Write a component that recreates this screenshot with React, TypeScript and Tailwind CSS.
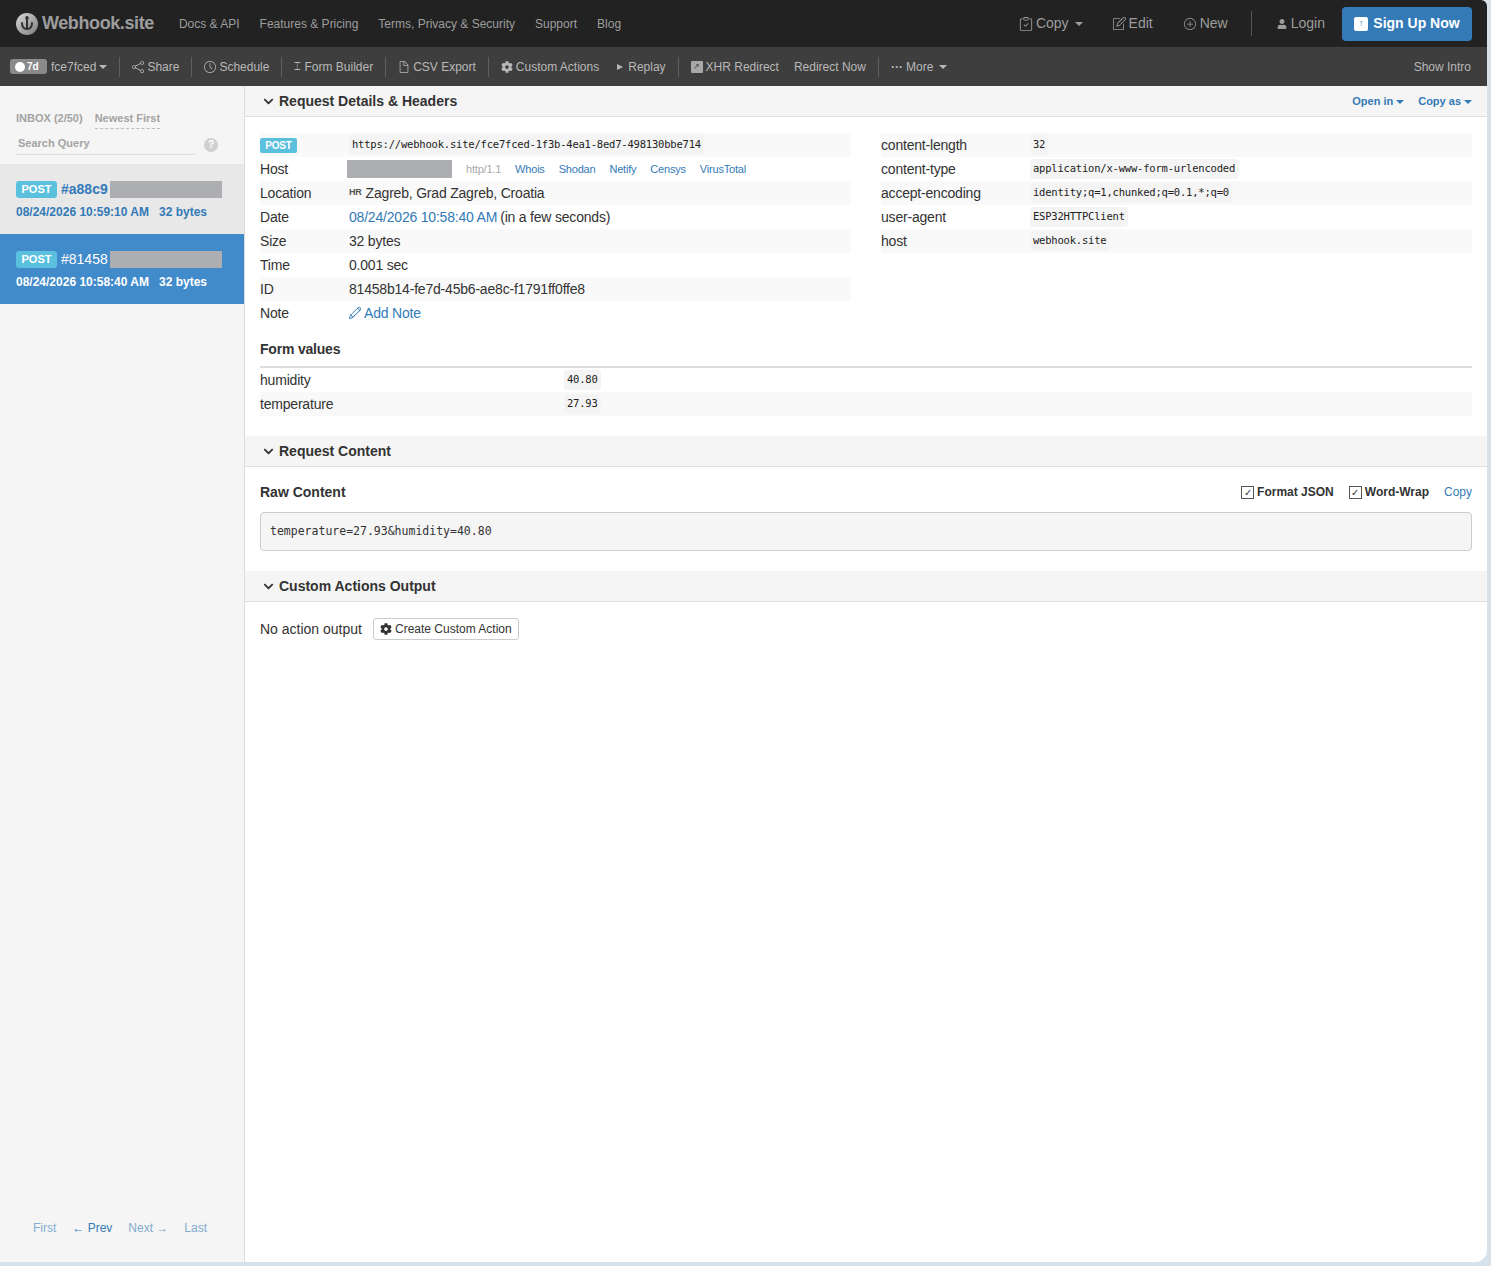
import { FaCog, FaChevronDown, FaUser } from "react-icons/fa";
import { SlShare, SlClock, SlDoc, SlPencil, SlPlus, SlNote } from "react-icons/sl";
import { BsClipboardCheck } from "react-icons/bs";
import type { ReactNode } from "react";

const font = { fontFamily: '"Liberation Sans", Arial, sans-serif' };

function Caret({ className = "" }: { className?: string }) {
  return <span className={`ml-[3px] inline-block h-0 w-0 border-x-4 border-t-4 border-x-transparent border-t-current align-middle ${className}`} />;
}

function Logo() {
  return (
    <svg width="22" height="22" viewBox="0 0 22 22" className="shrink-0">
      <defs>
        <linearGradient id="lg" x1="0" y1="0" x2="1" y2="1">
          <stop offset="0" stopColor="#d8d8d8" />
          <stop offset="1" stopColor="#7c7c7c" />
        </linearGradient>
      </defs>
      <circle cx="11" cy="11" r="11" fill="url(#lg)" />
      <path d="M11 4v11M6 10c0 4 2 6 5 6s5-2 5-6" stroke="#333" strokeWidth="2" fill="none" strokeLinecap="round" />
      <circle cx="11" cy="5" r="1.8" fill="#333" />
    </svg>
  );
}

function Sep() {
  return <span className="mx-[12px] h-[20px] w-px bg-[#5e5e5e]" />;
}

function ToolItem({ icon, children }: { icon?: ReactNode; children: ReactNode }) {
  return (
    <span className="flex items-center gap-[3px] whitespace-nowrap">
      {icon}
      {children}
    </span>
  );
}

function SectionHeader({ title, right }: { title: string; right?: ReactNode }) {
  return (
    <div className="flex h-[31px] items-center justify-between border-b border-[#dfdfdf] bg-[#f5f5f5] pl-[18px] pr-[15px]">
      <div className="flex items-center gap-[5px] text-[14px] font-bold text-[#333]">
        <FaChevronDown className="text-[11px]" />
        {title}
      </div>
      {right}
    </div>
  );
}

function Mono({ children }: { children: ReactNode }) {
  return (
    <code className="rounded-[4px] bg-[#f4f4f4] px-[3px] py-[2px] text-[10.5px] text-[#222]" style={{ fontFamily: '"DejaVu Sans Mono", monospace' }}>
      {children}
    </code>
  );
}

function Row({ label, children, striped, labelWidth = 89 }: { label: ReactNode; children: ReactNode; striped?: boolean; labelWidth?: number }) {
  return (
    <div className={`flex h-[24px] items-center text-[14px] tracking-[-0.2px] text-[#333] ${striped ? "bg-[#f9f9f9]" : ""}`}>
      <div className="shrink-0" style={{ width: labelWidth }}>{label}</div>
      <div className="flex min-w-0 items-center">{children}</div>
    </div>
  );
}

function RequestItem({ hash, date, active }: { hash: string; date: string; active?: boolean }) {
  return (
    <div className={`h-[70px] pl-[16px] pt-[17px] ${active ? "bg-[#428bca] text-white" : "bg-[#e8e8e8] text-[#337ab7]"}`}>
      <div className="flex h-[17px] items-center">
        <span className="flex h-[17px] w-[41px] items-center justify-center rounded-[3px] bg-[#5bc0de] text-[11px] font-bold text-white">POST</span>
        <span className={`ml-[4px] text-[14px] ${active ? "" : "font-bold"}`}>{hash}</span>
        <span className="absolute left-[110px] h-[17px] w-[112px] bg-[#acaeb1]" />
      </div>
      <div className="mt-[5px] flex gap-[10px] text-[12px] font-bold">
        <span>{date}</span>
        <span>32 bytes</span>
      </div>
    </div>
  );
}

export default function App() {
  return (
    <div className="h-[1266px] w-full overflow-hidden bg-[#d8e2ea] pb-[4px] pr-[4px]" style={font}>
      <div className="flex h-full flex-col overflow-hidden rounded-br-[12px] rounded-tr-[6px] bg-white">
        {/* top nav */}
        <header className="flex h-[47px] shrink-0 items-center bg-[#222] pl-[16px] pr-[15px] text-[12px] text-[#9d9d9d]">
          <Logo />
          <span className="ml-[4px] text-[18px] font-bold tracking-[-0.4px] text-[#9d9d9d]">Webhook.site</span>
          <nav className="ml-[25px] flex gap-[20px]">
            <span>Docs &amp; API</span>
            <span>Features &amp; Pricing</span>
            <span>Terms, Privacy &amp; Security</span>
            <span>Support</span>
            <span>Blog</span>
          </nav>
          <div className="ml-auto flex items-center text-[14px]">
            <span className="flex items-center gap-[3px]"><BsClipboardCheck className="text-[14px]" />Copy<Caret /></span>
            <span className="ml-[30px] flex items-center gap-[3px]"><SlNote className="text-[13px]" />Edit</span>
            <span className="ml-[31px] flex items-center gap-[4px]"><SlPlus className="text-[12px]" />New</span>
            <span className="ml-[23px] h-[25px] w-px bg-[#555]" />
            <span className="ml-[25px] flex items-center gap-[4px]"><FaUser className="text-[10px]" />Login</span>
            <span className="ml-[17px] flex h-[34px] w-[130px] items-center justify-center gap-[5px] rounded-[4px] bg-[#337ab7] text-[14px] font-bold text-white">
              <span className="flex h-[14px] w-[14px] items-center justify-center rounded-[2px] bg-white text-[9px] font-normal text-[#337ab7]">↑</span>
              Sign Up Now
            </span>
          </div>
        </header>

        {/* toolbar */}
        <div className="flex h-[39px] shrink-0 items-center bg-[#3e3e3e] pl-[10px] pr-[16px] text-[12px] text-[#b8b8b8]">
          <span className="flex h-[15px] w-[37px] items-center gap-[2px] rounded-[3px] bg-[#8a8a8a] pl-[5px] text-[10px] font-bold text-white">
            <span className="h-[10px] w-[10px] rounded-full bg-white" />7d
          </span>
          <span className="ml-[4px]">fce7fced<Caret /></span>
          <Sep />
          <ToolItem icon={<SlShare className="text-[12px]" />}>Share</ToolItem>
          <Sep />
          <ToolItem icon={<SlClock className="text-[12px]" />}>Schedule</ToolItem>
          <Sep />
          <ToolItem icon={<span className="text-[11px]">⌶</span>}>Form Builder</ToolItem>
          <Sep />
          <ToolItem icon={<SlDoc className="text-[12px]" />}>CSV Export</ToolItem>
          <Sep />
          <ToolItem icon={<FaCog className="text-[12px]" />}>Custom Actions</ToolItem>
          <span className="ml-[18px] mr-[5px] h-0 w-0 border-y-[3.5px] border-l-[6px] border-y-transparent border-l-[#b8b8b8]" />
          <span>Replay</span>
          <Sep />
          <ToolItem icon={<span className="flex h-[12px] w-[12px] items-center justify-center rounded-[1px] bg-[#a8a8a8] text-[8px] text-[#444]">↗</span>}>XHR Redirect</ToolItem>
          <span className="ml-[15px]">Redirect Now</span>
          <Sep />
          <span className="flex items-center gap-[3px]"><span className="font-bold">···</span>More<Caret /></span>
          <span className="ml-auto">Show Intro</span>
        </div>

        <div className="flex min-h-0 flex-1">
          {/* sidebar */}
          <aside className="relative flex w-[245px] shrink-0 flex-col border-r border-[#dcdcdc] bg-[#f5f5f5]">
            <div className="h-[78px] pl-[16px] pt-[24px] text-[11px] font-bold text-[#a3a3a3]">
              <div className="flex">
                <span>INBOX (2/50)</span>
                <span className="ml-[12px] border-b border-dashed border-[#bbb] pb-[1px]">Newest First</span>
              </div>
              <div className="mt-[6px] flex items-center">
                <div className="w-[179px] border-b border-[#ddd] pb-[3px] pl-[2px]">Search Query</div>
                <span className="ml-[9px] flex h-[14px] w-[14px] items-center justify-center rounded-full bg-[#d0d0d0] text-[10px] text-white">?</span>
              </div>
            </div>
            <div className="relative">
              <RequestItem hash="#a88c9" date="08/24/2026 10:59:10 AM" />
              <RequestItem hash="#81458" date="08/24/2026 10:58:40 AM" active />
            </div>
            <div className="mt-auto flex h-[43px] gap-[16px] pl-[33px] text-[12px] text-[#337ab7]">
              <span className="opacity-60">First</span>
              <span>← Prev</span>
              <span className="opacity-60">Next →</span>
              <span className="opacity-60">Last</span>
            </div>
          </aside>

          {/* content */}
          <main className="min-w-0 flex-1">
            <SectionHeader
              title="Request Details & Headers"
              right={
                <div className="flex gap-[14px] text-[11px] font-bold text-[#337ab7]">
                  <span>Open in<Caret /></span>
                  <span>Copy as<Caret /></span>
                </div>
              }
            />
            <div className="px-[15px] pt-[16px]">
              <div className="grid grid-cols-[591px_591px] gap-x-[30px]">
                <div>
                  <Row striped label={<span className="flex h-[15px] w-[37px] items-center justify-center rounded-[2px] bg-[#5bc0de] text-[10px] font-bold text-white">POST</span>}>
                    <Mono>https://webhook.site/fce7fced-1f3b-4ea1-8ed7-498130bbe714</Mono>
                  </Row>
                  <Row label="Host">
                    <span className="-ml-[2px] h-[18px] w-[105px] bg-[#acaeb1]" />
                    <div className="ml-[14px] flex gap-[14px] text-[11px] text-[#337ab7]">
                      <span className="text-[#aaa]">http/1.1</span>
                      <span>Whois</span>
                      <span>Shodan</span>
                      <span>Netify</span>
                      <span>Censys</span>
                      <span>VirusTotal</span>
                    </div>
                  </Row>
                  <Row striped label="Location"><span className="mr-[4px] text-[9px] font-bold text-[#555]">HR</span>Zagreb, Grad Zagreb, Croatia</Row>
                  <Row label="Date"><span className="text-[#337ab7]">08/24/2026 10:58:40 AM</span><span className="ml-[3px]">(in a few seconds)</span></Row>
                  <Row striped label="Size">32 bytes</Row>
                  <Row label="Time">0.001 sec</Row>
                  <Row striped label="ID">81458b14-fe7d-45b6-ae8c-f1791ff0ffe8</Row>
                  <Row label="Note"><span className="flex items-center gap-[3px] text-[#337ab7]"><SlPencil className="text-[12px]" />Add Note</span></Row>
                </div>
                <div>
                  <Row striped labelWidth={149} label="content-length"><Mono>32</Mono></Row>
                  <Row labelWidth={149} label="content-type"><Mono>application/x-www-form-urlencoded</Mono></Row>
                  <Row striped labelWidth={149} label="accept-encoding"><Mono>identity;q=1,chunked;q=0.1,*;q=0</Mono></Row>
                  <Row labelWidth={149} label="user-agent"><Mono>ESP32HTTPClient</Mono></Row>
                  <Row striped labelWidth={149} label="host"><Mono>webhook.site</Mono></Row>
                </div>
              </div>

              <div className="mt-[14px] border-b-2 border-[#ddd] pb-[6px] text-[14px] font-bold tracking-[-0.2px] text-[#333]">Form values</div>
              <Row labelWidth={304} label="humidity"><Mono>40.80</Mono></Row>
              <Row striped labelWidth={304} label="temperature"><Mono>27.93</Mono></Row>
            </div>

            <div className="mt-[20px]">
              <SectionHeader title="Request Content" />
            </div>
            <div className="px-[15px] pb-[20px] pt-[16px]">
              <div className="flex h-[18px] items-center justify-between">
                <span className="text-[14px] font-bold text-[#333]">Raw Content</span>
                <div className="flex items-center text-[12px] font-bold text-[#333]">
                  <span className="mr-[3px] flex h-[13px] w-[13px] items-center justify-center border border-[#555] text-[10px] font-normal">✓</span>
                  Format JSON
                  <span className="ml-[15px] mr-[3px] flex h-[13px] w-[13px] items-center justify-center border border-[#555] text-[10px] font-normal">✓</span>
                  Word-Wrap
                  <span className="ml-[15px] font-normal text-[#337ab7]">Copy</span>
                </div>
              </div>
              <pre className="mt-[11px] h-[39px] rounded-[4px] border border-[#ccc] bg-[#f5f5f5] px-[9px] py-[10px] text-[11.5px] leading-[16px] text-[#333]" style={{ fontFamily: '"DejaVu Sans Mono", monospace' }}>temperature=27.93&amp;humidity=40.80</pre>
            </div>

            <SectionHeader title="Custom Actions Output" />
            <div className="flex items-center px-[15px] pt-[16px] text-[14px] text-[#333]">
              No action output
              <span className="ml-[11px] flex h-[22px] items-center gap-[3px] rounded-[3px] border border-[#ccc] bg-white px-[6px] text-[12px]">
                <FaCog className="text-[12px]" />
                Create Custom Action
              </span>
            </div>
          </main>
        </div>
      </div>
    </div>
  );
}
